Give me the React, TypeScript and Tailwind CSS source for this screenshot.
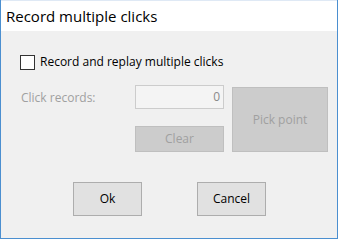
const font = "font-['Segoe_UI','Open_Sans','Liberation_Sans',sans-serif]";

export default function App() {
  return (
    <div className={`w-[340px] h-[240px] bg-white ${font}`}>
      <div className="w-[338px] h-[239px] flex flex-col border-x border-b border-[#4b8fd0] bg-[#f0f0f0]">
        <div className="h-[31px] bg-white flex items-center px-[5px] text-[15px] text-black border-t border-[#dfe9f5]">
          Record multiple clicks
        </div>

        <div className="flex-1 flex flex-col pl-[19px]">
          <label className="mt-[22px] flex items-center gap-[5px] text-[12px] text-black">
            <span className="w-[15px] h-[15px] border border-[#333] bg-white" />
            Record and replay multiple clicks
          </label>

          <div className="mt-[14px] flex">
            <div className="w-[115px] pt-[4px] pl-[1px] text-[12px] text-[#a0a0a0]">Click records:</div>
            <div className="w-[89px] flex flex-col">
              <div className="h-[24px] border border-[#cccccc] bg-[#f4f4f4] text-right pr-[3px] text-[12px] leading-[22px] text-[#8a8a8a]">
                0
              </div>
              <button className="mt-[17px] h-[26px] border border-[#bfbfbf] bg-[#cccccc] text-[12px] text-[#a0a0a0]">
                Clear
              </button>
            </div>
            <button className="ml-[8px] mt-[2px] w-[96px] h-[65px] border border-[#bfbfbf] bg-[#cccccc] text-[12px] text-[#a0a0a0]">
              Pick point
            </button>
          </div>

          <div className="mt-[30px] flex pl-[53px] gap-[55px]">
            <button className="w-[69px] h-[34px] border border-[#adadad] bg-[#e1e1e1] text-[12px] text-black">Ok</button>
            <button className="w-[69px] h-[34px] border border-[#adadad] bg-[#e1e1e1] text-[12px] text-black">Cancel</button>
          </div>
        </div>
      </div>
    </div>
  );
}
